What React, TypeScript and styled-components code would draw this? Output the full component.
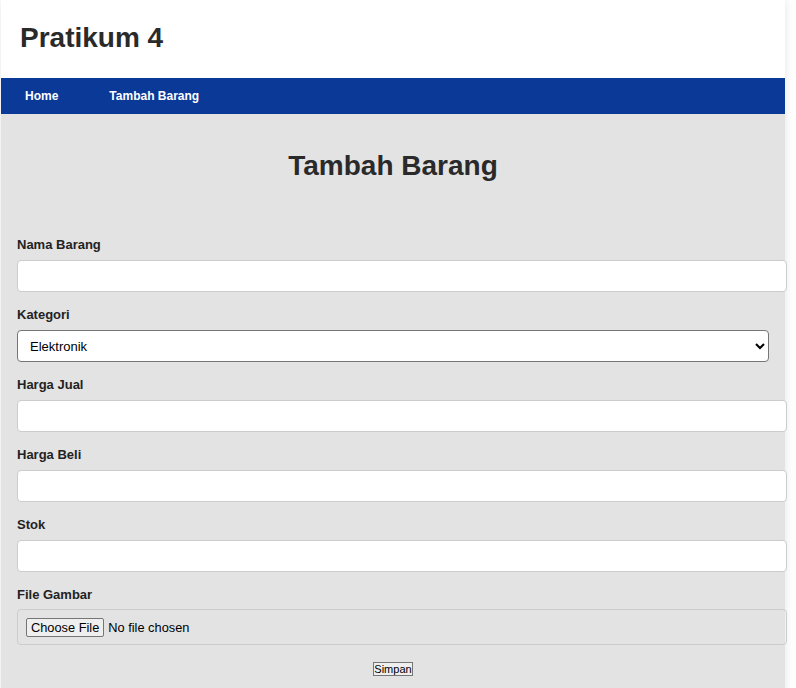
import React from "react";
import styled, { createGlobalStyle } from "styled-components";

const Global = createGlobalStyle`
  html, body { margin: 0; padding: 0; background: #ffffff; }
  body { font-family: "Liberation Sans", Arial, sans-serif; color: #222; }
`;

const Page = styled.div`
  width: 784px;
  margin-left: 1px;
  box-shadow: 0 0 10px rgba(0, 0, 0, 0.1);
  background: #e3e3e3;
  min-height: 688px;
`;

const Header = styled.header`
  height: 78px;
  box-sizing: border-box;
  background: #ffffff;
  display: flex;
  align-items: center;
  padding: 0 19px 3px;
`;

const Title = styled.h1`
  margin: 0;
  font-size: 28px;
  font-weight: bold;
  color: #2a2a2a;
`;

const Nav = styled.nav`
  height: 36px;
  background: #0a3998;
  display: flex;
  align-items: center;
  gap: 51px;
  padding: 0 24px;
`;

const NavLink = styled.a`
  color: #ffffff;
  font-size: 12px;
  font-weight: bold;
  text-decoration: none;
`;

const Main = styled.main`
  padding: 36px 16px 20px;
`;

const Heading = styled.h2`
  margin: 0 0 55px;
  font-size: 28px;
  line-height: 32px;
  font-weight: bold;
  text-align: center;
  color: #2a2a2a;
`;

const Form = styled.form`
  display: block;
`;

const Label = styled.label`
  display: block;
  font-size: 13px;
  line-height: 15px;
  font-weight: bold;
  color: #222;
  margin-bottom: 8px;
`;

const TextInput = styled.input`
  display: block;
  box-sizing: content-box;
  width: 100%;
  height: 14px;
  padding: 8px;
  margin: 0 0 15px;
  border: 1px solid #cccccc;
  border-radius: 4px;
  background: #ffffff;
  font-family: "Liberation Sans", Arial, sans-serif;
  font-size: 13px;
  outline: none;
`;

const Select = styled.select`
  display: block;
  box-sizing: border-box;
  width: 100%;
  height: 32px;
  padding: 0 8px;
  margin: 0 0 15px;
  border: 1px solid #767676;
  border-radius: 4px;
  background: #ffffff;
  color: #000;
  font-family: "Liberation Sans", Arial, sans-serif;
  font-size: 13px;
`;

const FileInput = styled.input`
  display: block;
  box-sizing: content-box;
  width: 100%;
  height: 18px;
  padding: 8px;
  margin: -1px 0 17px;
  border: 1px solid #cccccc;
  border-radius: 4px;
  background: transparent;
  font-family: "Liberation Sans", Arial, sans-serif;
  font-size: 12.8px;
  color: #000;

  &::file-selector-button {
    font-family: "Liberation Sans", Arial, sans-serif;
    font-size: 12.8px;
    padding: 1px 4px;
    margin-right: 4px;
    border: 1px solid #767676;
    border-radius: 2px;
    background: #efefef;
    color: #000;
  }
`;

const Actions = styled.div`
  display: flex;
  justify-content: center;
`;

const SubmitButton = styled.button`
  font-family: "Liberation Sans", Arial, sans-serif;
  font-size: 11px;
  padding: 0;
  border: 1px solid #767676;
  border-radius: 0;
  background: #efefef;
  color: #000;
  line-height: 12px;
`;

const textFieldsTop = [{ id: "nama", label: "Nama Barang" }];
const textFieldsBottom = [
  { id: "jual", label: "Harga Jual" },
  { id: "beli", label: "Harga Beli" },
  { id: "stok", label: "Stok" },
];

export default function App() {
  return (
    <>
      <Global />
      <Page>
        <Header>
          <Title>Pratikum 4</Title>
        </Header>
        <Nav>
          <NavLink href="#">Home</NavLink>
          <NavLink href="#">Tambah Barang</NavLink>
        </Nav>
        <Main>
          <Heading>Tambah Barang</Heading>
          <Form onSubmit={(e) => e.preventDefault()}>
            {textFieldsTop.map((f) => (
              <React.Fragment key={f.id}>
                <Label htmlFor={f.id}>{f.label}</Label>
                <TextInput id={f.id} type="text" />
              </React.Fragment>
            ))}
            <Label htmlFor="kategori">Kategori</Label>
            <Select id="kategori" defaultValue="Elektronik">
              <option>Elektronik</option>
              <option>Pakaian</option>
              <option>Makanan</option>
            </Select>
            {textFieldsBottom.map((f) => (
              <React.Fragment key={f.id}>
                <Label htmlFor={f.id}>{f.label}</Label>
                <TextInput id={f.id} type="text" />
              </React.Fragment>
            ))}
            <Label htmlFor="gambar">File Gambar</Label>
            <FileInput id="gambar" type="file" />
            <Actions>
              <SubmitButton type="submit">Simpan</SubmitButton>
            </Actions>
          </Form>
        </Main>
      </Page>
    </>
  );
}
